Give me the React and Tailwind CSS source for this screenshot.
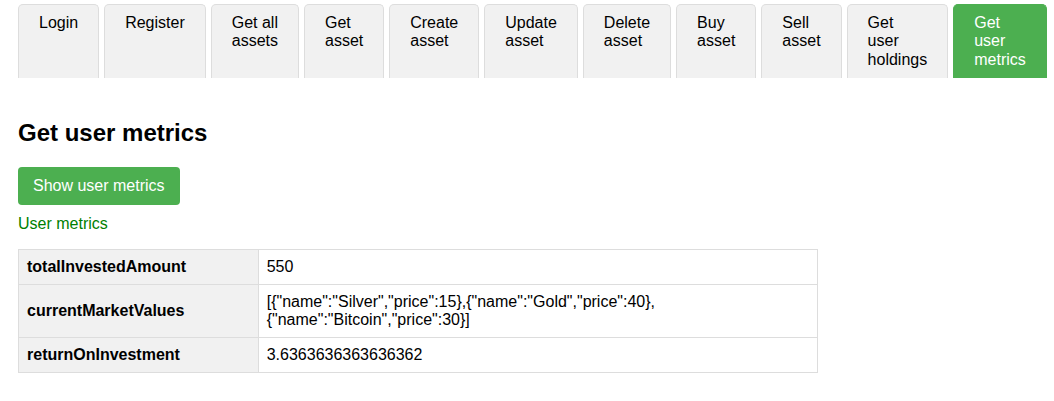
import React from "react";

const tabs = [
  "Login",
  "Register",
  "Get all assets",
  "Get asset",
  "Create asset",
  "Update asset",
  "Delete asset",
  "Buy asset",
  "Sell asset",
  "Get user holdings",
  "Get user metrics",
];

const rows = [
  ["totalInvestedAmount", "550"],
  [
    "currentMarketValues",
    '[{"name":"Silver","price":15},{"name":"Gold","price":40},{"name":"Bitcoin","price":30}]',
  ],
  ["returnOnInvestment", "3.6363636363636362"],
];

export default function App() {
  return (
    <div
      className="min-h-[401px] bg-white text-black text-[16px] leading-[1.15]"
      style={{ fontFamily: '"Liberation Sans", Arial, sans-serif' }}
    >
      <div className="flex gap-[5px] pt-[4px] pl-[18px] pr-[8px]">
        {tabs.map((t, i) => {
          const active = i === tabs.length - 1;
          return (
            <div
              key={t}
              className={
                active
                  ? "text-left px-5 pt-[9px] pb-[9px] border border-b-0 border-[#4CAF50] rounded-t-[5px] bg-[#4CAF50] text-white"
                  : "text-left px-5 pt-[9px] pb-[9px] border border-b-0 border-[#dddddd] rounded-t-[5px] bg-[#f1f1f1] text-black"
              }
            >
              {t}
            </div>
          );
        })}
      </div>

      <div className="pl-[18px]">
        <h2 className="mt-[41px] text-[24px] font-bold leading-[1.15]">Get user metrics</h2>
        <button className="mt-[20px] h-[38px] px-[15px] rounded-[4px] bg-[#4CAF50] text-white text-[16px] leading-[1.15]">
          Show user metrics
        </button>
        <div className="mt-[10px] text-[#008000]">User metrics</div>
        <table className="mt-[16px] w-[800px] border-collapse leading-[18px]">
          <tbody>
            {rows.map(([k, v]) => (
              <tr key={k}>
                <th className="w-[30%] border border-[#dddddd] bg-[#f1f1f1] p-2 text-left font-bold align-middle">
                  {k}
                </th>
                <td className="border border-[#dddddd] p-2 text-left align-middle">{v}</td>
              </tr>
            ))}
          </tbody>
        </table>
      </div>
    </div>
  );
}
